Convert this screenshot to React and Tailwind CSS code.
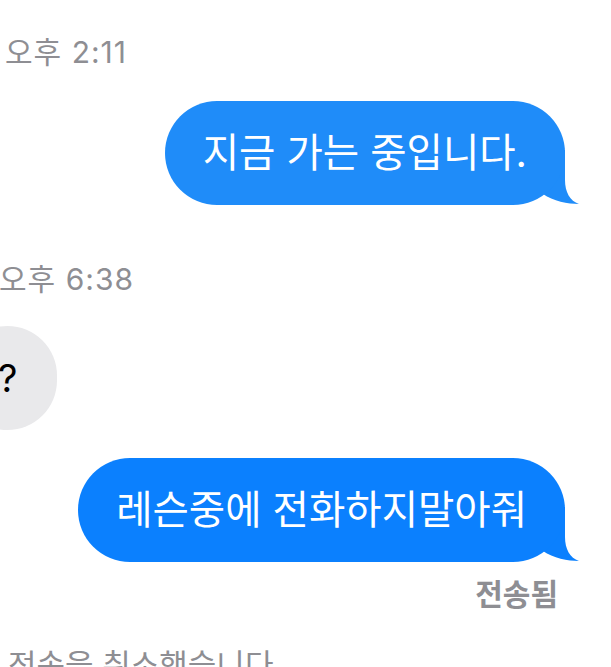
import React from "react";

const FONT = { fontFamily: 'Inter, "Noto Sans CJK KR", "Noto Sans", sans-serif' };

function Tail({ color }) {
  return (
    <svg
      className="absolute right-[-15px] bottom-0"
      width="40"
      height="60"
      viewBox="0 0 40 60"
    >
      <path
        d="M25 5 L25 35 C25 47 30 56 39 59 C28 59 13 56 3 49 L0 5 Z"
        fill={color}
      />
    </svg>
  );
}

function SentBubble({ text, color, bg }) {
  return (
    <div className="self-end mr-[46px] relative">
      <div
        className={`relative z-10 h-[104px] rounded-[52px] flex items-center px-[38px] text-white text-[39.5px] leading-[48px] whitespace-nowrap ${bg}`}
      >
        {text}
      </div>
      <Tail color={color} />
    </div>
  );
}

export default function App() {
  return (
    <div
      className="w-[611px] h-[667px] overflow-hidden bg-white flex flex-col"
      style={FONT}
    >
      <div className="mt-[34px] pl-[5px] text-[30px] leading-[36px] tracking-[1px] text-[#8e8e93]">
        오후 2:11
      </div>
      <div className="mt-[31px] flex flex-col">
        <SentBubble text="지금 가는 중입니다." color="#1f8cf9" bg="bg-[#1f8cf9]" />
      </div>
      <div className="mt-[56px] ml-[-1px] text-[30px] leading-[36px] tracking-[1px] text-[#8e8e93]">
        오후 6:38
      </div>
      <div className="mt-[29px] flex">
        <div className="ml-[-42px] h-[104px] rounded-[52px] bg-[#e9e9eb] flex items-center pl-[40px] pr-[40px] text-black text-[38px] leading-[44px]">
          ?
        </div>
      </div>
      <div className="mt-[28px] flex flex-col">
        <SentBubble text="레슨중에 전화하지말아줘" color="#0b80fe" bg="bg-[#0b80fe]" />
      </div>
      <div className="mt-[14px] self-end mr-[53px] text-[30px] leading-[36px] font-semibold text-[#8e8e93]">
        전송됨
      </div>
      <div className="mt-[34px] pl-[8px] text-[31px] leading-[38px] text-[#8e8e93] whitespace-nowrap">
        전송을 취소했습니다
      </div>
    </div>
  );
}
